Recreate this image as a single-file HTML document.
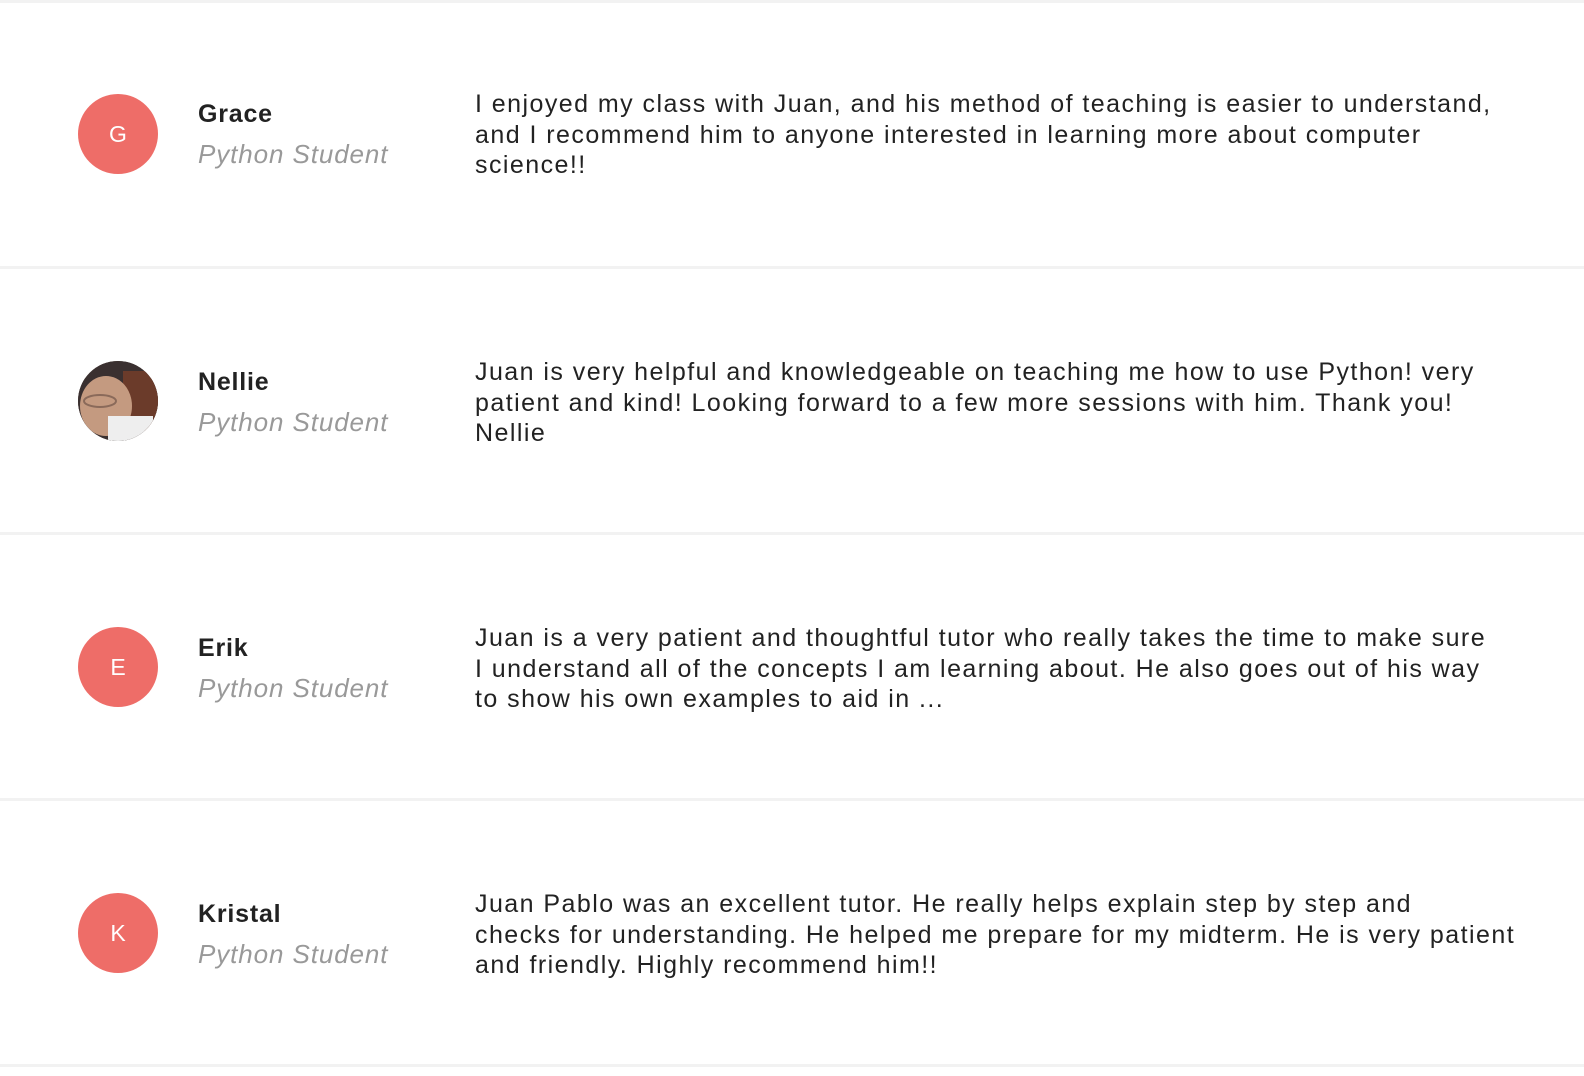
<!DOCTYPE html>
<html><head><meta charset="utf-8"><style>
*{margin:0;padding:0;box-sizing:border-box}
body{width:1584px;height:1076px;background:#fff;font-family:"Liberation Sans",sans-serif;color:#222;position:relative;overflow:hidden}
.sep{position:absolute;left:0;width:1584px;height:3px;background:#f2f2f2}
.av{position:absolute;left:78px;width:80px;height:80px;border-radius:50%;background:#ee6d68;color:#fff;font-size:23px;display:flex;align-items:center;justify-content:center;overflow:hidden}
.nm{position:absolute;left:198px;font-size:25px;font-weight:bold;color:#222;letter-spacing:0.8px}
.sub{position:absolute;left:198px;font-size:26px;font-style:italic;color:#999;letter-spacing:0.9px}
.tx{position:absolute;left:475px;font-size:25px;line-height:30.5px;color:#222;white-space:nowrap;letter-spacing:1.45px}
</style></head><body>
<div class="sep" style="top:0"></div>
<div class="sep" style="top:266px"></div>
<div class="sep" style="top:532px"></div>
<div class="sep" style="top:798px"></div>
<div class="sep" style="top:1064px"></div>

<div class="av" style="top:94px">G</div>
<div class="nm" style="top:100px">Grace</div>
<div class="sub" style="top:139px">Python Student</div>
<div class="tx" style="top:89px">I enjoyed my class with Juan, and his method of teaching is easier to understand,<br>and I recommend him to anyone interested in learning more about computer<br>science!!</div>

<div class="av" style="top:361px;background:#5a4a40">
<svg width="80" height="80" viewBox="0 0 80 80"><rect width="80" height="80" fill="#3a3030"/><rect x="45" y="10" width="35" height="60" fill="#6b3b2a"/><ellipse cx="28" cy="45" rx="26" ry="30" fill="#c49a80"/><rect x="30" y="55" width="45" height="25" fill="#eee"/><ellipse cx="22" cy="40" rx="16" ry="6" fill="none" stroke="#8a6a5a" stroke-width="2"/></svg></div>
<div class="nm" style="top:368px">Nellie</div>
<div class="sub" style="top:407px">Python Student</div>
<div class="tx" style="top:357px">Juan is very helpful and knowledgeable on teaching me how to use Python! very<br>patient and kind! Looking forward to a few more sessions with him. Thank you!<br>Nellie</div>

<div class="av" style="top:627px">E</div>
<div class="nm" style="top:634px">Erik</div>
<div class="sub" style="top:673px">Python Student</div>
<div class="tx" style="top:623px">Juan is a very patient and thoughtful tutor who really takes the time to make sure<br>I understand all of the concepts I am learning about. He also goes out of his way<br>to show his own examples to aid in ...</div>

<div class="av" style="top:893px">K</div>
<div class="nm" style="top:900px">Kristal</div>
<div class="sub" style="top:939px">Python Student</div>
<div class="tx" style="top:889px">Juan Pablo was an excellent tutor. He really helps explain step by step and<br>checks for understanding. He helped me prepare for my midterm. He is very patient<br>and friendly. Highly recommend him!!</div>
</body></html>
